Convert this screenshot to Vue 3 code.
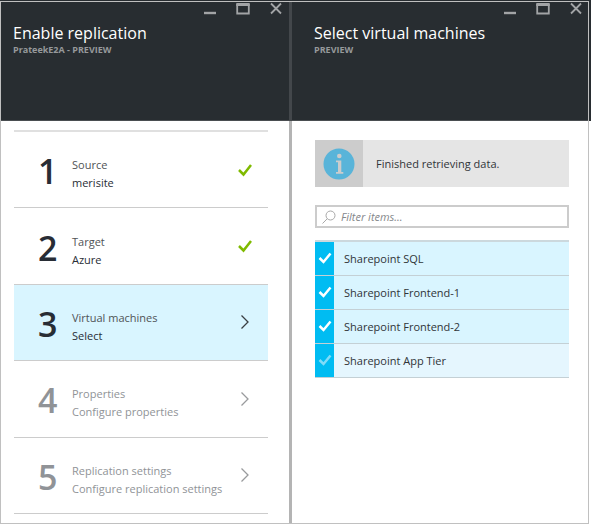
<script setup>
import { ref } from 'vue'

const blades = [
  { id: 'enable', title: 'Enable replication', subtitle: 'PrateekE2A - PREVIEW' },
  { id: 'select', title: 'Select virtual machines', subtitle: 'PREVIEW' },
]

const steps = [
  { number: 1, title: 'Source', detail: 'merisite', state: 'done' },
  { number: 2, title: 'Target', detail: 'Azure', state: 'done' },
  { number: 3, title: 'Virtual machines', detail: 'Select', state: 'active' },
  { number: 4, title: 'Properties', detail: 'Configure properties', state: 'pending' },
  { number: 5, title: 'Replication settings', detail: 'Configure replication settings', state: 'pending' },
]

const filter = ref('')
const machines = ref([
  { name: 'Sharepoint SQL', checked: true },
  { name: 'Sharepoint Frontend-1', checked: true },
  { name: 'Sharepoint Frontend-2', checked: true },
  { name: 'Sharepoint App Tier', checked: false },
])
</script>

<template>
  <main class="page">
    <div class="frame">
      <section v-for="blade in blades" :key="blade.id" class="blade" :class="blade.id">
        <header class="head">
          <div class="controls">
            <button type="button" aria-label="Minimize">
              <svg width="14" height="14" viewBox="0 0 14 14"><path d="M1 11h12" stroke-width="2.4" /></svg>
            </button>
            <button type="button" aria-label="Maximize">
              <svg width="14" height="14" viewBox="0 0 14 14"><path d="M1.2 2v9.500h11.600V2" stroke-width="1.8" /><path d="M.3 2.500h13.400" stroke-width="3" /></svg>
            </button>
            <button type="button" aria-label="Close">
              <svg width="14" height="14" viewBox="0 0 14 14"><path d="M2 1.500l10 10M12 1.500l-10 10" stroke-width="1.8" /></svg>
            </button>
          </div>
          <h1>{{ blade.title }}</h1>
          <p>{{ blade.subtitle }}</p>
        </header>

        <div v-if="blade.id === 'enable'" class="body">
          <ol class="steps">
            <li v-for="step in steps" :key="step.number">
              <button type="button" class="step" :class="step.state">
                <span class="number">{{ step.number }}</span>
                <span class="label">
                  <span>{{ step.title }}</span>
                  <span class="detail">{{ step.detail }}</span>
                </span>
                <svg v-if="step.state === 'done'" class="tick" width="14" height="14" viewBox="0 0 14 14"><path d="M1 7l4.500 4.500L13 2" /></svg>
                <svg v-else class="chevron" width="14" height="14" viewBox="0 0 14 14"><path d="M3.500 .5l6.500 6.500-6.500 6.500" /></svg>
              </button>
            </li>
          </ol>
        </div>

        <div v-else class="body">
          <div class="notice" role="status">
            <span class="notice-icon">
              <svg width="32" height="32" viewBox="0 0 32 32">
                <circle cx="16" cy="16" r="15.500" fill="#59b4d9" />
                <circle cx="16.300" cy="8" r="2.300" fill="#ccc" />
                <path d="M13 12.500h5.300v11.500h2v1.800h-7.300v-1.800h2v-9.700h-2z" fill="#ccc" />
              </svg>
            </span>
            <span>Finished retrieving data.</span>
          </div>
          <label class="filter">
            <svg width="14" height="14" viewBox="0 0 14 14"><circle cx="8.500" cy="5.500" r="4.500" /><path d="M5.300 8.700L.5 13.500" /></svg>
            <input v-model="filter" type="text" placeholder="Filter items..." aria-label="Filter items">
          </label>
          <ul class="machines">
            <li v-for="machine in machines" :key="machine.name">
              <label class="machine" :class="{ dim: !machine.checked }">
                <span class="box">
                  <input v-model="machine.checked" type="checkbox">
                  <svg width="14" height="14" viewBox="0 0 14 14"><path d="M1.500 6l4 4L12.500 1.500" /></svg>
                </span>
                <span>{{ machine.name }}</span>
              </label>
            </li>
          </ul>
        </div>
      </section>
    </div>
  </main>
</template>

<style>
body {
  margin: 0;
}
</style>

<style scoped>
* {
  box-sizing: border-box;
}

.page {
  display: flex;
  min-height: 100vh;
  padding: 1px 2px 1px 0;
  background: linear-gradient(#282d31 121px, #fff 121px);
  font-family: "Segoe UI", "Open Sans", "Noto Sans", sans-serif;
  font-size: 11px;
  line-height: 18px;
  color: #303438;
}

.frame {
  flex: 1;
  display: grid;
  grid-template-columns: 291fr 296fr;
  border: 1px solid #c0c0c0;
}

.blade {
  display: flex;
  flex-direction: column;
  min-width: 0;
  background: #fff;
}

.head {
  height: 119px;
  padding: 0 5px 0 22px;
  background: #282d31;
  border-bottom: 1px solid #4a4e51;
  color: #fff;
}

.enable .head {
  padding: 0 6px 0 12px;
  border-right: 3px solid #43474b;
}

.controls {
  display: flex;
  justify-content: flex-end;
  gap: 19px;
}

.controls button {
  display: block;
  padding: 0;
  border: 0;
  background: none;
}

.controls svg {
  display: block;
  fill: none;
  stroke: #a2a4a6;
}

h1 {
  margin: 7px 0 0;
  font-size: 16px;
  line-height: 20px;
  font-weight: 400;
  white-space: nowrap;
}

.head p {
  margin: 0;
  font-size: 9px;
  line-height: 14px;
  font-weight: 700;
  color: #96999b;
}

.body {
  flex: 1;
  padding: 19px 19px 20px 23px;
}

.enable .body {
  display: flex;
  padding: 9px 21px 9px 13px;
  border-right: 3px solid #b4b4b4;
}

ol,
ul {
  margin: 0;
  padding: 0;
  list-style: none;
}

.steps {
  flex: 1;
  display: grid;
  grid-auto-rows: 1fr;
  border-top: 2px solid #e0e0e0;
}

.steps li {
  display: flex;
}

.step {
  flex: 1;
  display: flex;
  align-items: center;
  padding: 0 16px 0 24px;
  border: 0;
  border-bottom: 1px solid #ccc;
  background: #fff;
  color: #505356;
  font: inherit;
  text-align: left;
}

.number {
  width: 34px;
  padding-top: 3px;
  font-size: 34px;
  line-height: 40px;
  font-weight: 600;
  color: #282d35;
}

.label {
  flex: 1;
  display: flex;
  flex-direction: column;
  padding-top: 9px;
}

.detail {
  color: #282d35;
}

.active {
  background: #d9f5ff;
}

.pending,
.pending .number,
.pending .detail {
  color: #909397;
}

.step svg {
  fill: none;
}

.tick {
  stroke: #7fba00;
  stroke-width: 2.5;
}

.chevron {
  stroke: #3a3e42;
  stroke-width: 1.3;
}

.pending .chevron {
  stroke: #999b9d;
}

.notice {
  display: flex;
  align-items: center;
  gap: 13px;
  height: 47px;
  background: #e5e5e5;
}

.notice-icon {
  display: grid;
  place-items: center;
  width: 48px;
  height: 47px;
  background: #ccc;
}

.filter {
  display: flex;
  align-items: center;
  gap: 5px;
  height: 23px;
  margin: 18px 0 12px;
  padding: 0 5px;
  border: 2px solid #ccc;
}

.filter svg {
  fill: none;
  stroke: #a8a8a8;
}

.filter input {
  flex: 1;
  min-width: 0;
  padding: 0;
  border: 0;
  outline: 0;
  background: none;
  font: inherit;
  font-style: italic;
}

.filter input::placeholder {
  color: #85888b;
  opacity: 1;
}

.machines {
  border-top: 2px solid #ccd8dd;
}

.machine {
  display: flex;
  align-items: stretch;
  gap: 10px;
  height: 34px;
  line-height: 33px;
  border-bottom: 1px solid #c4d0d5;
  background: #d9f5ff;
}

.machine.dim {
  background: #e5f6fe;
}

.box {
  display: grid;
  place-items: center;
  width: 19px;
  background: #00bcf2;
}

.box input,
.box svg {
  grid-area: 1 / 1;
}

.box input {
  appearance: none;
  width: 100%;
  height: 100%;
  margin: 0;
}

.box svg {
  fill: none;
  stroke: #fff;
  stroke-width: 2.5;
  pointer-events: none;
}

.dim .box svg {
  stroke: #80dcf8;
}
</style>
